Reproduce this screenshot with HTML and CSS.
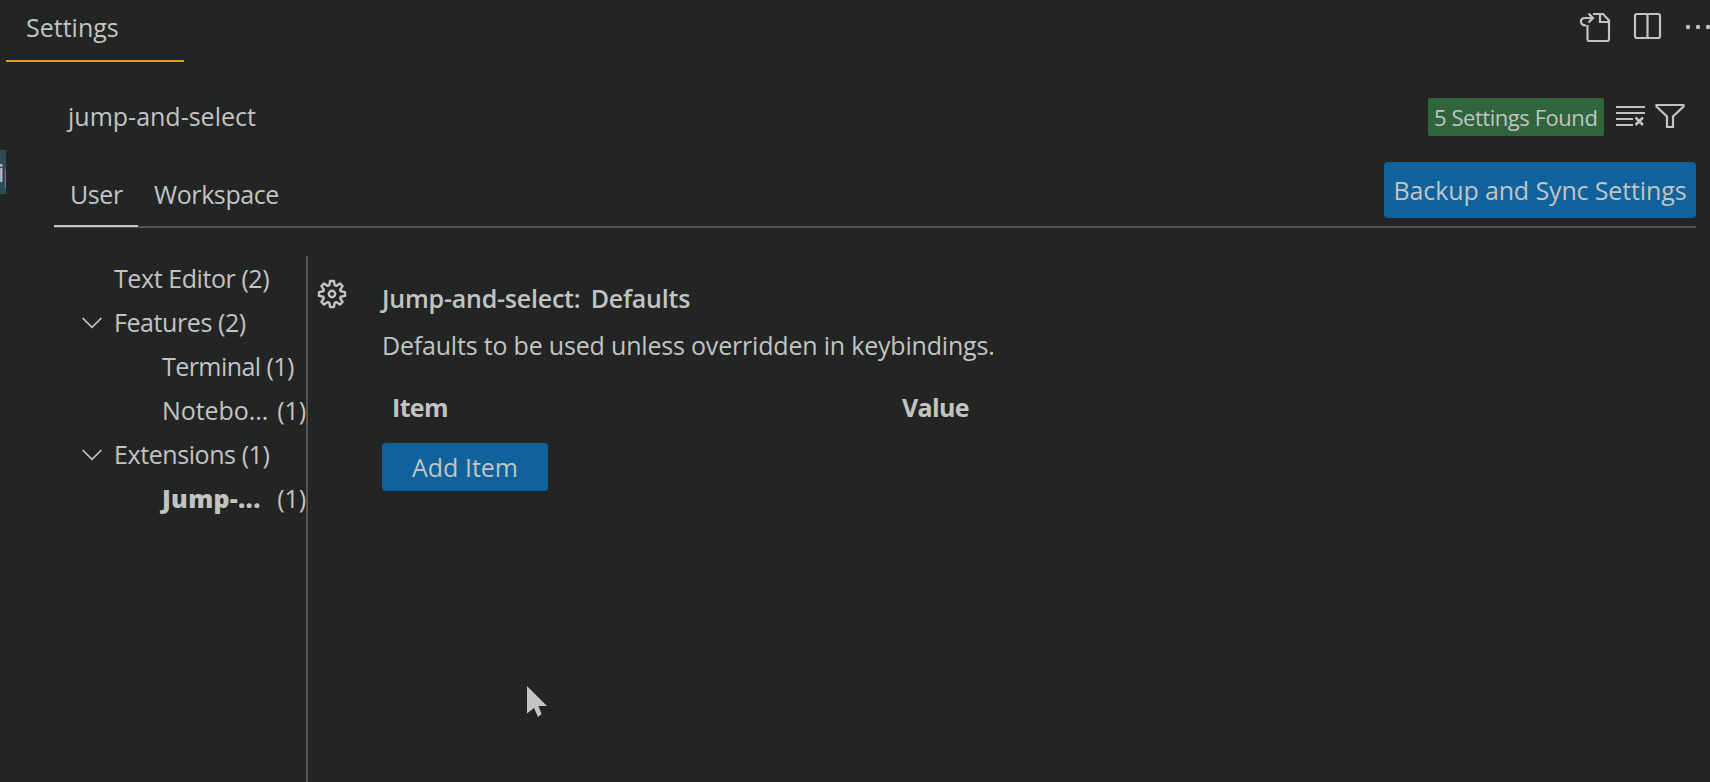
FILE: index.html
```
<!DOCTYPE html>
<html lang="en">
<head>
<meta charset="utf-8">
<title>Settings</title>
<link rel="stylesheet" href="styles.css">
</head>
<body>
<div class="window">
  <aside class="edge"><div class="edge-mark">i</div></aside>
  <main class="editor">
    <header class="tabbar">
      <div class="tab"><span>Settings</span></div>
      <div class="actions">
        <svg width="32" height="32" viewBox="0 0 32 32" fill="none" stroke="currentColor" stroke-width="2.200"><path d="M14 3h10l6 6.500v18.500q0 2-2 2H10.500q-2 0-2-2V14"/><path d="M21 3v8h8.500"/><path d="M7 14.500C2.500 14.500 1.500 11.500 2 9.500Q2.700 7 6 7h8M9.500 2.500 14 7 9.500 11.500"/></svg>
        <svg width="32" height="32" viewBox="0 0 32 32" fill="none" stroke="currentColor" stroke-width="2.200"><rect x="4" y="3" width="25" height="24" rx="2"/><path d="M16.500 3v24"/></svg>
        <svg width="32" height="32" viewBox="0 0 32 32" fill="currentColor"><circle cx="5" cy="16" r="2.200"/><circle cx="15" cy="16" r="2.200"/><circle cx="25" cy="16" r="2.200"/></svg>
      </div>
    </header>
    <div class="search">
      <span class="query">jump-and-select</span>
      <div class="tools">
        <span class="badge">5 Settings Found</span>
        <svg class="clear" width="32" height="32" viewBox="0 0 32 32" fill="none" stroke="currentColor" stroke-width="2"><path d="M2 7h29M2 13h29M2 19h17M2 25h17"/><path d="M21.500 17.500l7.500 7.500M29 17.500l-7.500 7.500" stroke-width="2.500"/></svg>
        <svg class="filter" width="32" height="32" viewBox="0 0 32 32" fill="none" stroke="currentColor" stroke-width="2.200"><path d="M2.500 5h27v1.500L19 16.500V27h-6V16.500L2.500 6.500z"/></svg>
      </div>
    </div>
    <nav class="scopes">
      <div class="scope active">User</div>
      <div class="scope">Workspace</div>
      <button class="sync">Backup and Sync Settings</button>
    </nav>
    <section class="content">
      <ul class="tree">
        <li class="row">Text Editor (2)</li>
        <li class="row"><svg class="chev" width="20" height="12" viewBox="0 0 20 12" fill="none" stroke="currentColor" stroke-width="1.700"><path d="M.6 1 10 10.400 19.400 1"/></svg>Features (2)</li>
        <li class="row child">Terminal (1)</li>
        <li class="row child"><span class="elided">Notebo...</span><span class="count">(1)</span></li>
        <li class="row"><svg class="chev" width="20" height="12" viewBox="0 0 20 12" fill="none" stroke="currentColor" stroke-width="1.700"><path d="M.6 1 10 10.400 19.400 1"/></svg>Extensions (1)</li>
        <li class="row child"><span class="selected">Jump-...</span><span class="count">(1)</span></li>
      </ul>
      <div class="gutter">
        <svg width="30" height="30" viewBox="-15 -15 30 30" fill="none" stroke="currentColor" stroke-width="2.400" stroke-linejoin="round"><path d="M-1.900-13h3.800L2.700-8.800 4.300-8.100 7.900-10.600 10.600-7.900 8.100-4.300 8.800-2.700 13-1.900v3.800L8.800 2.700 8.100 4.300 10.600 7.900 7.900 10.600 4.300 8.100 2.700 8.800 1.900 13h-3.800L-2.700 8.800-4.300 8.100-7.900 10.600-10.600 7.900-8.100 4.300-8.800 2.700-13 1.900v-3.800L-8.800-2.700-8.100-4.300-10.600-7.900-7.900-10.600-4.300-8.100-2.700-8.800z"/><circle r="3.200"/></svg>
      </div>
      <article class="setting">
        <h2>Jump-and-select: Defaults</h2>
        <p>Defaults to be used unless overridden in keybindings.</p>
        <div class="cols"><span>Item</span><span>Value</span></div>
        <button class="add">Add Item</button>
      </article>
    </section>
  </main>
  <svg class="cursor" width="22" height="32" viewBox="0 0 22 32" fill="currentColor"><path d="M1 0 21 20H12.500L15.500 28 12 31 8 22 1 27.500z"/></svg>
</div>
</body>
</html>
```
FILE: styles.css
```
* { box-sizing: border-box; }
body { margin: 0; background: #232525; color: #c2c4c3; font: 25px/34px "Open Sans", "Noto Sans", sans-serif; }
.window { display: flex; position: relative; width: 1710px; height: 782px; overflow: hidden; }
.edge { width: 6px; padding-top: 150px; overflow: hidden; }
.edge-mark { height: 44px; background: linear-gradient(#2396bd, #2396bd) 5px 19px / 1px 19px no-repeat #2d4b57; line-height: 45px; text-indent: -2px; }
.editor { flex: 1; min-width: 0; display: flex; flex-direction: column; }
.tabbar { display: flex; justify-content: space-between; height: 62px; overflow: hidden; }
.tab { width: 178px; padding: 10px 0 0 20px; border-bottom: 2px solid #e19c28; }
.actions { display: flex; gap: 20px; padding-top: 11px; margin-right: -5px; }
.actions svg { flex: none; }
span { white-space: nowrap; }
.search { display: flex; justify-content: space-between; height: 100px; padding: 36px 24px 0 62px; }
.query { padding-top: 1px; }
.tools { display: flex; align-items: flex-start; }
.badge { width: 176px; height: 38px; padding-left: 6px; border-radius: 2px; background: #30653c; font-size: 22px; line-height: 39px; letter-spacing: -.45px; }
.clear { margin-left: 10px; margin-top: 2px; }
.filter { margin-left: 8px; margin-top: 2px; }
.scopes { display: flex; height: 66px; margin: 0 14px 0 48px; border-bottom: 2px solid #505251; }
.scope { height: 65px; padding: 15px 16px 0; letter-spacing: -.4px; }
.active { width: 84px; border-bottom: 2px solid #c2c4c3; }
button { border: 0; padding: 0; border-radius: 4px; background: #10629d; color: inherit; font: inherit; }
.sync { width: 312px; height: 56px; margin-left: auto; letter-spacing: -.13px; }
.content { display: flex; flex: 1; padding: 28px 0 0 48px; }
.tree { width: 254px; margin: 0; padding: 0; list-style: none; border-right: 2px solid #555756; }
.row { position: relative; display: flex; height: 44px; padding-left: 60px; line-height: 45px; letter-spacing: -.42px; white-space: pre; }
.child { padding-left: 108px; letter-spacing: -.56px; }
.elided { letter-spacing: -.08px; }
.selected { font-weight: 800; letter-spacing: .3px; }
.chev { position: absolute; left: 28px; top: 17px; }
.count { margin-left: auto; letter-spacing: -.1px; }
.gutter { width: 74px; padding: 23px 0 0 9px; }
.setting { flex: 1; padding-top: 25px; }
h2, p { margin: 0; font-size: inherit; font-weight: 600; letter-spacing: -.22px; }
h2 { word-spacing: 4px; }
p { margin-top: 13px; font-weight: 400; letter-spacing: -.19px; }
.cols { display: grid; grid-template-columns: 510px 1fr; padding: 28px 0 0 10px; font-weight: 700; letter-spacing: -.65px; }
.add { display: block; width: 166px; height: 48px; margin-top: 19px; }
.cursor { position: absolute; left: 526px; top: 686px; }
```
